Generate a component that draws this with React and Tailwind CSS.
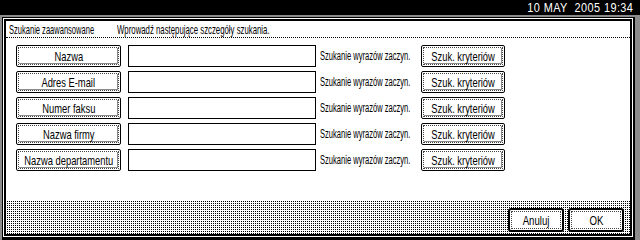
import React from "react";

const rows = ["Nazwa", "Adres E-mail", "Numer faksu", "Nazwa firmy", "Nazwa departamentu"];

function Label({ children, className = "" }) {
  return <span className={`inline-block whitespace-pre ${className}`}>{children}</span>;
}

function Btn({ children, className = "" }) {
  return (
    <div className={`border border-black rounded-[2px] bg-white p-px ${className}`}>
      <div className="h-full border border-dotted border-[#444] shadow-[inset_-1px_-1px_0_#8a8a8a] flex items-center justify-center text-[13px] text-black">
        <Label className="scale-x-[0.72]">{children}</Label>
      </div>
    </div>
  );
}

function BigBtn({ children }) {
  return (
    <div className="w-[56px] h-[24px] border-2 border-black rounded-[3px] bg-white p-px">
      <div className="h-full border border-dotted border-[#444] flex items-center justify-center text-[13px]">
        <Label className="scale-x-[0.74]">{children}</Label>
      </div>
    </div>
  );
}

export default function App() {
  return (
    <div className="w-[640px] h-[240px] bg-black flex flex-col overflow-hidden font-['Liberation_Sans',Arial,sans-serif] leading-none">
      {/* status bar */}
      <div className="h-[15px] flex items-center justify-end pr-[7px] text-white text-[13px]">
        <Label className="origin-right scale-x-[0.84] tracking-[0.5px]">{"10 MAY  2005 19:34"}</Label>
      </div>

      {/* window frame */}
      <div className="flex-1 flex bg-[#8c8c8c] pl-[2px] pt-[2px] pr-[5px]">
        <div className="flex-1 flex bg-white border-l border-t border-r-2 border-b-[3px] border-black p-px">
          <div className="flex-1 flex flex-col bg-white border-2 border-black">
            {/* header */}
            <div className="h-[17px] flex items-center pl-[3px] border-b border-dotted border-black text-[13px] text-black">
              <div className="w-[108px]">
                <Label className="origin-left scale-x-[0.58]">Szukanie zaawansowane</Label>
              </div>
              <Label className="origin-left scale-x-[0.6]">Wprowadź następujące szczegóły szukania.</Label>
            </div>

            {/* rows */}
            <div className="flex flex-col gap-[4px] pt-[7px] pl-[10px]">
              {rows.map((r) => (
                <div key={r} className="flex items-center h-[22px]">
                  <Btn className="w-[105px] h-[22px]">{r}</Btn>
                  <div className="ml-[7px] w-[188px] h-[22px] border border-black bg-white" />
                  <div className="w-[105px] pl-[4px] text-[12px] text-black">
                    <Label className="origin-left scale-x-[0.63]">Szukanie wyrazów zaczyn.</Label>
                  </div>
                  <Btn className="w-[84px] h-[22px]">Szuk. kryteriów</Btn>
                </div>
              ))}
            </div>

            <div className="flex-1" />

            {/* footer */}
            <div className="h-[34px] flex justify-end items-start gap-[4px] pt-[8px] pr-[6px] bg-[image:linear-gradient(90deg,#fff_1px,transparent_1px),linear-gradient(#fff_1px,#000_1px)] bg-[length:2px_2px]">
              <BigBtn>Anuluj</BigBtn>
              <BigBtn>OK</BigBtn>
            </div>
          </div>
        </div>
      </div>
    </div>
  );
}
